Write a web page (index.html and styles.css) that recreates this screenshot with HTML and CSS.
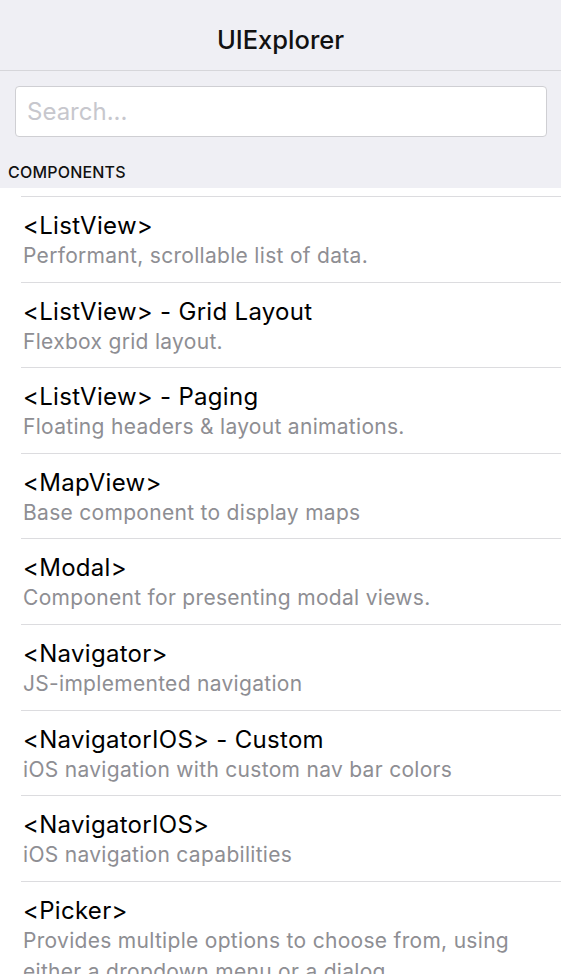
FILE: index.html
```html
<!DOCTYPE html>
<html>
<head>
<meta charset="utf-8">
<link rel="stylesheet" href="styles.css">
</head>
<body>
<div class="app">
  <header class="navbar"><h1 class="nav-title">UIExplorer</h1></header>
  <div class="search-wrap">
    <div class="search"><span class="placeholder">Search...</span></div>
  </div>
  <div class="section-header">COMPONENTS</div>
  <ul class="list">
    <li class="row"><div class="row-title">&lt;ListView&gt;</div><div class="row-desc">Performant, scrollable list of data.</div></li>
    <li class="row"><div class="row-title">&lt;ListView&gt; - Grid Layout</div><div class="row-desc">Flexbox grid layout.</div></li>
    <li class="row"><div class="row-title">&lt;ListView&gt; - Paging</div><div class="row-desc">Floating headers &amp; layout animations.</div></li>
    <li class="row"><div class="row-title">&lt;MapView&gt;</div><div class="row-desc">Base component to display maps</div></li>
    <li class="row"><div class="row-title">&lt;Modal&gt;</div><div class="row-desc">Component for presenting modal views.</div></li>
    <li class="row"><div class="row-title">&lt;Navigator&gt;</div><div class="row-desc">JS-implemented navigation</div></li>
    <li class="row"><div class="row-title">&lt;NavigatorIOS&gt; - Custom</div><div class="row-desc">iOS navigation with custom nav bar colors</div></li>
    <li class="row"><div class="row-title">&lt;NavigatorIOS&gt;</div><div class="row-desc">iOS navigation capabilities</div></li>
    <li class="row"><div class="row-title">&lt;Picker&gt;</div><div class="row-desc">Provides multiple options to choose from, using either a dropdown menu or a dialog.</div></li>
  </ul>
</div>
</body>
</html>
```
FILE: styles.css
```css
html, body {
  margin: 0;
  padding: 0;
  background: #ffffff;
  overflow: hidden;
}
body {
  font-family: Inter, "Noto Sans", sans-serif;
  -webkit-font-smoothing: antialiased;
}
.app {
  width: 561px;
  height: 974px;
  overflow: hidden;
  background: #efeff4;
}
.navbar {
  height: 71px;
  border-bottom: 1px solid #d6d6da;
  display: flex;
  align-items: center;
  justify-content: center;
  box-sizing: border-box;
  padding-top: 8px;
}
.nav-title {
  margin: 0;
  font-size: 25.5px;
  font-weight: 500;
  color: #111;
}
.search-wrap {
  padding: 15px 14px 0 15px;
}
.search {
  height: 51px;
  box-sizing: border-box;
  border: 1px solid #cfcfd3;
  border-radius: 4px;
  background: #fff;
  display: flex;
  align-items: center;
  padding-left: 11px;
}
.placeholder {
  font-size: 24px;
  color: #c7c7cd;
}
.section-header {
  height: 51px;
  box-sizing: border-box;
  padding: 25px 0 0 8px;
  font-size: 16px;
  font-weight: 500;
  color: #111;
  letter-spacing: 0.2px;
}
.list {
  list-style: none;
  margin: 0;
  padding: 8px 0 0 0;
  background: #fff;
}
.row {
  margin-left: 21px;
  border-top: 1px solid #dcdcdf;
  padding: 15px 15px 10.6px 2px;
}
.row-title {
  font-size: 24px;
  line-height: 28px;
  letter-spacing: 0.3px;
  color: #000;
}
.row-desc {
  font-size: 21px;
  line-height: 31px;
  letter-spacing: 0.3px;
  color: #8e8e93;
}
```
